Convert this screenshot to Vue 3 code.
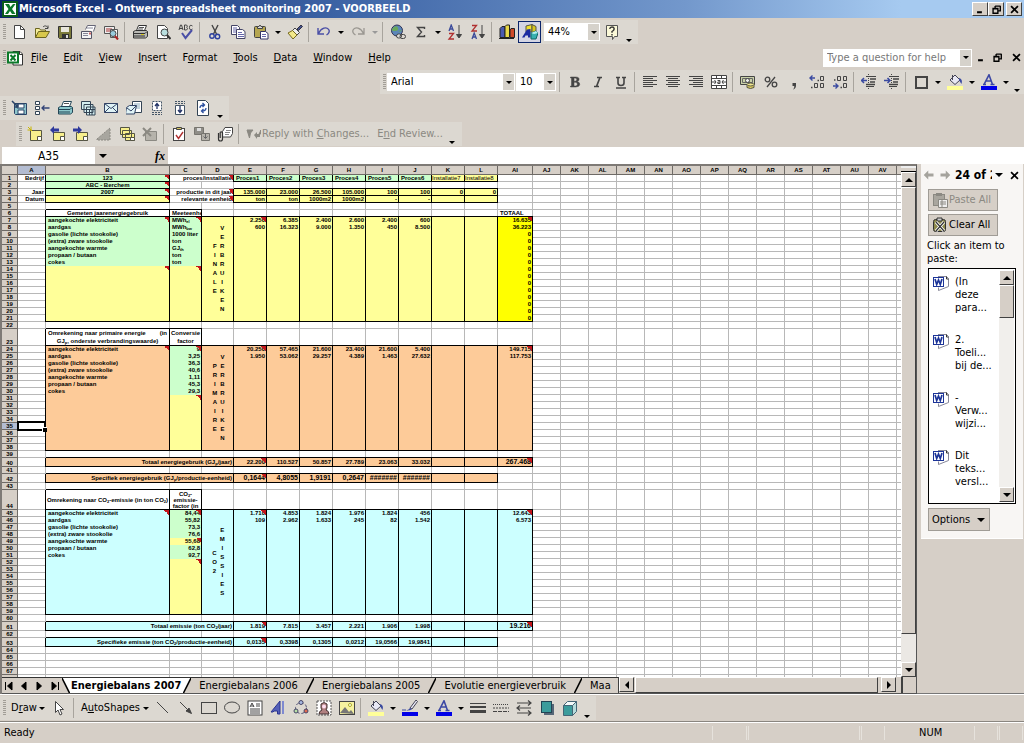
<script setup>
const icons = {
  excel: '<rect x="1" y="1" width="14" height="14" fill="#fff" stroke="#0a5a1a" stroke-width="2"/><path d="M3 3h4l1.500 3L11 3h2.500L10 8l3.500 5H10L8 10l-2 3H3l3.500-5z" fill="#0c7a2a"/>',
  book: '<path d="M6 1.500h7l2.500 2.500v11H6z" fill="#fff" stroke="#333"/><path d="M12.500 1.500v3h3" fill="none" stroke="#333"/><rect x="1" y="2.500" width="10" height="10" fill="#fff" stroke="#0c7a2a" stroke-width="2"/><path d="M3.500 5l5 5.500M8.500 5l-5 5.500" stroke="#0c7a2a" stroke-width="2"/>',
  new: '<path d="M3.500 1.500h6l4 4v9h-10z" fill="#fff" stroke="#444"/><path d="M9.500 1.500v4h4" fill="none" stroke="#444"/>',
  open: '<path d="M1.500 13.500v-9h4l1 1.500h5v2" fill="#f5ee9a" stroke="#6b6420"/><path d="M1.500 13.500l3-6h11l-3.500 6z" fill="#d8c84c" stroke="#6b6420"/><path d="M9 3c2-2 4-1 5 1M14 1.500V4.500h-3" fill="none" stroke="#444"/>',
  save: '<path d="M1.500 2.500h13v12h-12l-1-1z" fill="#7b7a3a" stroke="#333"/><path d="M4 3h8v5H4z" fill="#e8e6dc"/><path d="M5 10h7v4H5z" fill="#333"/><path d="M9 11h2v3H9z" fill="#ddd"/>',
  permission: '<path d="M5.500 5.500l2-4h8l-2 6" fill="#fff" stroke="#667"/><path d="M1.500 7.500h10v7h-10z" fill="#f4f4f4" stroke="#556"/><path d="M3 9.500h5M3 11.500h5M7 4h6" stroke="#889"/><rect x="9" y="8.500" width="2" height="2" fill="#c66"/>',
  search: '<path d="M1.500 2.500h10v7h-10z" fill="#eee" stroke="#555"/><path d="M3 5h6M3 7h5" stroke="#a33"/><path d="M7.500 5.500h7v8h-7z" fill="#fff" stroke="#555"/><circle cx="10" cy="9.500" r="3" fill="#9cd" stroke="#444"/><path d="M12 12l3 3.500" stroke="#a22" stroke-width="2"/>',
  print: '<path d="M4.500 6.500l2-5h8l-2 5" fill="#fff" stroke="#333"/><path d="M7 3.500h5M6 5h5" stroke="#555"/><path d="M1.500 7.500l2-1h11l1 1v5l-2 1.500h-12z" fill="#b9b9b4" stroke="#333"/><path d="M1.500 9.500h11.500l2-2M2 12h11" stroke="#333" fill="none"/><rect x="9" y="10" width="3" height="1" fill="#d8c820"/>',
  preview: '<path d="M2.500 1.500h7l3 3v10h-10z" fill="#fff" stroke="#444"/><circle cx="9.500" cy="8.500" r="3.500" fill="#b8dede" stroke="#444"/><path d="M12 11l3.500 4" stroke="#333" stroke-width="2"/>',
  spell: '<path d="M1 6l1.500-5h1L5 6M1.500 4.500h3M6.500 1v5h2q2-1.300.300-2.600 1.300-1.400-.3-2.400zM14.500 2q-3-2-3 1.500t3 1.500" fill="none" stroke="#444"/><path d="M4 9l3.500 5L14 6" fill="none" stroke="#4a4fa6" stroke-width="2"/>',
  cut: '<path d="M5 1l4.500 9M11 1L6.500 10" stroke="#444" stroke-width="1.400"/><circle cx="5" cy="12" r="2.200" fill="none" stroke="#2b3f9e" stroke-width="1.400"/><circle cx="10.500" cy="12.500" r="2.200" fill="none" stroke="#2b3f9e" stroke-width="1.400"/>',
  copy: '<path d="M1.500 1.500h6l2 2v7h-8z" fill="#fff" stroke="#446"/><path d="M3 4h4M3 6h5M3 8h5" stroke="#66a"/><path d="M6.500 5.500h6l2.500 2v7H6.500z" fill="#fff" stroke="#446"/><path d="M8 8.500h4M8 10.500h6M8 12.500h6" stroke="#66a"/>',
  paste: '<rect x="1.500" y="2.500" width="11" height="11" rx="1" fill="#b5a650" stroke="#444"/><path d="M4.500 4.500v-2h1.500l1-1.500 1 1.500h1.500v2z" fill="#ddd" stroke="#444"/><path d="M7.500 7.500h5l2.500 2v5.500H7.500z" fill="#fff" stroke="#336"/><path d="M9 10.500h4M9 12.500h4" stroke="#66a"/>',
  brush: '<path d="M10 5l4-4 1.500 1.500-4 4z" fill="#44508a" stroke="#334"/><path d="M8 4l4.500 4.500L10 11 5.500 6.500z" fill="#eee" stroke="#444"/><path d="M5.500 6.500L10 11l-4 4-5-6z" fill="#f3e98a" stroke="#776a20"/>',
  undo: '<path d="M2 4v6h6M2.500 9.500C5 4 11 2 13 6c1 2.500-1 4-2.500 5" fill="none" stroke="#4a4fa6" stroke-width="1.400"/>',
  redo: '<path d="M14 4v6H8M13.500 9.500C11 4 5 2 3 6c-1 2.500 1 4 2.500 5" fill="none" stroke="#9a9791" stroke-width="1.300"/>',
  link: '<circle cx="7" cy="6.500" r="5.500" fill="#5b86b8" stroke="#335"/><path d="M4 3q3-2 4 1t-3 3-3-2M8 8q3-3 4-1" fill="#69a85c"/><rect x="6.500" y="10" width="5" height="4" rx="2" fill="#ddd" stroke="#444"/><rect x="10" y="10.500" width="5.500" height="4" rx="2" fill="none" stroke="#444"/>',
  sum: '<path d="M11.500 5v-1.500h-7L8.500 8l-4 4.500h7V11" fill="none" stroke="#444" stroke-width="1.400"/>',
  sortAsc: '<path d="M2 7l2.200-6L6.500 7M3 5h3" fill="none" stroke="#3a4a9a" stroke-width="1.300"/><path d="M2 9.500h4.500L2 15h5" fill="none" stroke="#b03030" stroke-width="1.300"/><path d="M12 1v12M9.500 10.500l2.500 3.500 2.500-3.500z" stroke="#444" fill="#444"/>',
  sortDesc: '<path d="M2 1.500h4.500L2 7h5" fill="none" stroke="#b03030" stroke-width="1.300"/><path d="M2 15l2.200-6 2.300 6M3 13h3" fill="none" stroke="#3a4a9a" stroke-width="1.300"/><path d="M12 1v12M9.500 10.500l2.500 3.500 2.500-3.500z" stroke="#444" fill="#444"/>',
  chart: '<path d="M1 4.500l2-2h3v11H1z" fill="#4a5ab0" stroke="#222"/><path d="M6 2.500l1.500-1.500h3v12.500H6z" fill="#e8d848" stroke="#222"/><path d="M11 6l1-1.500h3.500v9H11z" fill="#d04a28" stroke="#222"/><path d="M0 14.500h15" stroke="#222"/>',
  drawing: '<path d="M4 2l6-1.500V8H4z" fill="#f1e02e" stroke="#554"/><path d="M10 .5l4 2V9h-4z" fill="#d8c620" stroke="#554"/><path d="M0 13.500L5 5.500l3.500-.5v8.500H6v-2H3.500l-1 2z" fill="#1a2aa0"/><path d="M9 9l5-2 2 2-2 6H9z" fill="#38b0b0" stroke="#166"/><path d="M9 9l5-2 2 2-4 1z" fill="#b8f0f0"/>',
  help: '<path d="M2.500 1.500h11v11h-3l-2 3v-3h-6z" fill="#fbf9d8" stroke="#555"/><path d="M5.700 5q.3-2 2.300-2t2.200 1.800Q10 6.300 8 7.500v1.300M8 10v1.500" fill="none" stroke="#333" stroke-width="1.400"/>',
  bold: '<path d="M3.500 3h5q4 0 3.500 2.800Q11.800 7.300 10 7.700q3 .4 2.700 2.900Q12.500 13 8.500 13h-5v-1H4.500V4H3.500zM7 4v3.200h1.200q1.600 0 1.600-1.600T8.200 4zm0 4.300V12h1.500q1.900 0 1.900-1.800T8.500 8.300z" fill="#444" stroke="#444" stroke-width=".5" fill-rule="evenodd"/>',
  italic: '<path d="M7 3.500h5M4 12.500h5M10 3.500l-3.500 9" stroke="#444" stroke-width="1.700" fill="none"/>',
  underline: '<path d="M3 3.500h4M9 3.500h4M5 3.500V9q0 2.500 3 2.500t3-2.500V3.500M3 14h10" fill="none" stroke="#444" stroke-width="1.600"/>',
  left: '<path d="M1 2.500h14M1 4.500h10M1 6.500h14M1 8.500h10M1 10.500h14M1 12.500h10" stroke="#444"/>',
  center: '<path d="M1 2.500h14M3 4.500h10M1 6.500h14M3 8.500h10M1 10.500h14M3 12.500h10" stroke="#444"/>',
  right: '<path d="M1 2.500h14M5 4.500h10M1 6.500h14M5 8.500h10M1 10.500h14M5 12.500h10" stroke="#444"/>',
  merge: '<path d="M.5 1.500h15v13H.5zM.5 4.500h15M.5 11.500h15M5.500 1.500v3M10.500 1.500v3M5.500 11.500v3M10.500 11.500v3" fill="#fff" stroke="#444"/><path d="M1 8h4M3.500 6L5 8l-1.500 2M15 8h-4M12.500 6L11 8l1.500 2M6.500 6.500h2.500v3H6.800V8H9" fill="none" stroke="#444"/>',
  currency: '<path d="M.5 2.500h14v8H.5z" fill="#c8d0a8" stroke="#444"/><path d="M2.500 4.500h10v4h-10z" fill="none" stroke="#666"/><circle cx="7.500" cy="6.500" r="2" fill="#eee" stroke="#444"/><path d="M7 10.500v3q3.500 2 7 0v-3" fill="#e2d060" stroke="#554"/><ellipse cx="10.500" cy="10.500" rx="3.500" ry="1.500" fill="#f0e690" stroke="#554"/>',
  percent: '<circle cx="4.500" cy="5.500" r="2.300" fill="none" stroke="#444" stroke-width="1.300"/><circle cx="11.500" cy="10.500" r="2.300" fill="none" stroke="#444" stroke-width="1.300"/><path d="M12 3L4 13" stroke="#444" stroke-width="1.300"/>',
  comma: '<path d="M6.500 9h3.500v2.500q0 3-3 4 1.500-1.500 1.300-3.500H6.500z" fill="#444"/>',
  incDec: '<path d="M1 4h5M3.500 1.500L1 4l2.500 2.500" fill="none" stroke="#3a4aa0" stroke-width="1.400"/><path d="M8.500 6.500h1.500M2 13.500h1.500" stroke="#444" stroke-width="1.500"/><path d="M11.500 2.500h3v4h-3zM5.500 9.500h3v4h-3zM11.500 9.500h3v4h-3z" fill="none" stroke="#444"/>',
  decDec: '<path d="M1 12h5M3.500 9.500L6 12l-2.500 2.500" fill="none" stroke="#3a4aa0" stroke-width="1.400"/><path d="M2 6h1.500M8.500 13.500h1.500" stroke="#444" stroke-width="1.500"/><path d="M5.500 2.500h3v4h-3zM11.500 2.500h3v4h-3zM11.500 9.500h3v4h-3z" fill="none" stroke="#444"/>',
  outdent: '<path d="M5 2.500h10M5 12.500h8" stroke="#444"/><path d="M9 5h6M9 8h5M5 10.500h9" stroke="#444" stroke-width="1.700"/><path d="M0 6.500h6M3 4L.5 6.500 3 9" fill="none" stroke="#3a4aa0" stroke-width="1.500"/><path d="M7.500 0v16" stroke="#444" stroke-dasharray="1 1"/>',
  indent: '<path d="M5 2.500h10M5 12.500h8" stroke="#444"/><path d="M9 5h6M9 8h5M5 10.500h9" stroke="#444" stroke-width="1.700"/><path d="M0 6.500h6M3.500 4L6 6.500 3.500 9" fill="none" stroke="#3a4aa0" stroke-width="1.500"/><path d="M7.500 0v16" stroke="#444" stroke-dasharray="1 1"/>',
  border: '<rect x="3" y="3" width="11" height="11" fill="none" stroke="#444" stroke-width="2"/>',
  fill: '<path d="M3 6l5-5 5 5-5 4.500z" fill="#e8e8f4" stroke="#445"/><path d="M5.500 1v5" stroke="#445"/><path d="M12 4q4 1 2.500 6Q13 8 12 6" fill="#3a4aa0"/><rect x="0" y="12" width="16" height="4" fill="#ffff99"/>',
  line: '<path d="M14 0l1.500 1.500L10 9 8 8z" fill="#e8e8f4" stroke="#445"/><path d="M8 8l2 1q-2 2-6 1.500Q7 9.500 8 8z" fill="#3a4aa0"/><path d="M0 10h4" stroke="#3a4aa0"/><rect x="0" y="12" width="16" height="4" fill="#0000e8"/>',
  font: '<path d="M3 10.500L8 .8l3.500 9.700M5 7h5.500M2 10.500h3M9.500 10.500h4" fill="none" stroke="#3c48a4" stroke-width="1.600"/><rect x="0" y="12" width="16" height="4" fill="#0000e8"/>',
  saveVer: '<path d="M3.500 3.500h12v11h-11l-1-1z" fill="#8ec6cc" stroke="#2b4468"/><path d="M6 4h7v4H6zM7 10h6v4H7z" fill="#fff" stroke="#2b4468"/><path d="M1 1l6 6M7 3v4H3" fill="none" stroke="#2b4468" stroke-width="1.500"/>',
  tree: '<path d="M1.500 1.500h4v3h-4zM1.500 6.500h4v3h-4zM1.500 11.500h4v3h-4z" fill="#fff" stroke="#345"/><path d="M15.500 8H8M10.500 5.500L8 8l2.500 2.500" fill="none" stroke="#347" stroke-width="1.300"/>',
  printTeal: '<path d="M4.500 6.500l2-5h8l-2 5" fill="#fff" stroke="#245"/><path d="M7 3.500h5" stroke="#555"/><path d="M1.500 7.500l2-1h11l1 1v5l-2 1.500h-12z" fill="#8cc8cc" stroke="#245"/><path d="M1.500 9.500h11.500l2-2M2 12h11" stroke="#245" fill="none"/>',
  sheets: '<path d="M1.500 1.500h9v8h-9zM4 4.500h9v8H4zM6.500 7h8.500v8H6.500z" fill="#d4eef0" stroke="#345"/><path d="M7 9.500h8M9.500 9.500V15M12 9.500V15" stroke="#345"/>',
  mail: '<path d="M1.500 3.500h13v9h-13z" fill="#dff3f6" stroke="#346"/><path d="M1.500 3.500l6.500 5 6.500-5M1.500 12.500l5-5M14.500 12.500l-5-5" fill="none" stroke="#346"/>',
  mailDoc: '<path d="M6.500 1.500h9v11h-9z" fill="#fff" stroke="#345"/><path d="M8 4h6M8 6h6M8 8h6" stroke="#8ab"/><path d="M.5 7.500l3-2h7l-2 8.500h-9z" fill="#dff3f6" stroke="#346"/><path d="M1 8l4 3 5-5" fill="none" stroke="#346"/>',
  moveUp: '<path d="M3.500 1.500h9v9h-9z" fill="#fff" stroke="#456" stroke-dasharray="2 1"/><path d="M8 9V4M6 6l2-2.500L10 6" fill="none" stroke="#236" stroke-width="1.300"/><path d="M3 12.500h10M3 14.500h10" stroke="#456" stroke-dasharray="2 1"/>',
  moveDown: '<path d="M3.500 5.500h9v9h-9z" fill="#fff" stroke="#456"/><path d="M8 6v6M6 10l2 2.500 2-2.500" fill="none" stroke="#236" stroke-width="1.300"/><path d="M3 1.500h10M3 3.500h10" stroke="#456" stroke-dasharray="2 1"/>',
  refresh: '<path d="M2.500.5h8l3 3v12h-11z" fill="#fff" stroke="#345"/><path d="M5 8q0-3 4-3M7.500 3l2 2-2 2M11 8q0 3-4 3M8.500 9l-2 2 2 2" fill="none" stroke="#2b50a0" stroke-width="1.300"/>',
  note: '<path d="M3.500 4.500h11v10h-11z" fill="#f7ef8c" stroke="#554"/><path d="M10.500 14.500v-4h4v4z" fill="#fff" stroke="#554"/><path d="M1 1l4 4M4 .5v4M.5 4h4" stroke="#c8b400"/>',
  prev: '<path d="M3.500 6.500h11v8h-11z" fill="#f7ef8c" stroke="#554"/><path d="M10.500 14.500v-4h4v4z" fill="#fff" stroke="#554"/><path d="M0 4l4-4v2.500h5v3H4V8z" fill="#2f3a9c"/>',
  next: '<path d="M3.500 6.500h11v8h-11z" fill="#f7ef8c" stroke="#554"/><path d="M10.500 14.500v-4h4v4z" fill="#fff" stroke="#554"/><path d="M9 4L5 0v2.500H0v3h5V8z" fill="#2f3a9c"/>',
  ink: '<path d="M1 13L14 2v12H1z" fill="#a8a69f" stroke="#8b8982" stroke-dasharray="2 1"/>',
  notes: '<path d="M1.500 1.500h9v7h-9zM3.500 4.500h9v7h-9zM6.500 7.500h9v7h-9z" fill="#f7ef8c" stroke="#554"/><path d="M11.500 14.500v-3h4v3z" fill="#fff" stroke="#554"/>',
  delNote: '<path d="M3.500 5.500h11v9h-11z" fill="#b6b3ab" stroke="#8b8982"/><path d="M1 2l8 8M9 2l-8 8" stroke="#8b8982" stroke-width="2"/>',
  task: '<rect x="2.500" y="2.500" width="11" height="12" fill="#fff" stroke="#444"/><path d="M5.500 3.500v-2h5v2z" fill="#d8c860" stroke="#444"/><path d="M5 9l2.500 3.500L12 6" fill="none" stroke="#b03030" stroke-width="1.400"/>',
  track: '<path d="M.5 1.500h9v7h-9z" fill="#8f8d87" stroke="#77756f"/><path d="M3 2h4v3H3z" fill="#ddd"/><path d="M7.500 7.500h8v7h-8z" fill="#b6b3ab" stroke="#77756f"/><path d="M11.500 8v4M9.500 10.500l2 2 2-2" fill="none" stroke="#666"/>',
  attach: '<path d="M5.500 5.500l2.500-4h7.500v6l-2 3.500h-8z" fill="#fff" stroke="#444"/><path d="M9 4.500h5M8 6.500h5M8 8.500h4" stroke="#888"/><path d="M1.500 7v6q0 2 2 2t2-2V7q0-1.200-1.200-1.200T3.200 7v5" fill="none" stroke="#333" stroke-width="1.200"/>',
  flags: '<path d="M1 4h6L4.500 7l-1 5zM14.500 4v4L11 11" fill="#8b8982" stroke="#8b8982"/><path d="M8 9l3-3v2h3v3h-3v2z" fill="#8b8982"/>',
  pointer: '<path d="M4.500 1.500v11l2.500-2.500 2 5 2-1-2-4.500h3.500z" fill="#fff" stroke="#444"/>',
  lineTool: '<path d="M2 2l11 11" stroke="#444"/>',
  arrowTool: '<path d="M2 2l8 8M13.500 13.500L8 11l3-3z" stroke="#444" fill="#444"/>',
  rect: '<rect x=".5" y="2.500" width="15" height="11" fill="none" stroke="#444"/>',
  oval: '<ellipse cx="8" cy="7.500" rx="7.500" ry="5.500" fill="none" stroke="#444"/>',
  textbox: '<rect x="1" y="1" width="14" height="14" fill="#fff" stroke="#444"/><path d="M3 7l2-4 2 4M4 6h3M9 4h4M9 6h4M3 9h10M3 11h10M3 13h10" fill="none" stroke="#444"/>',
  wordart: '<path d="M1 12L10 1v13H7.500v-3H4l-1 1z" fill="#5560b8" stroke="#2b3590"/><path d="M12 1h2v13h-2z" fill="#7f8ad0"/>',
  diagram: '<circle cx="8" cy="8" r="5.500" fill="none" stroke="#557" stroke-dasharray="3 2"/><circle cx="8" cy="2.500" r="2" fill="#a6b8e0" stroke="#446"/><circle cx="3" cy="11" r="2" fill="#b8e0a6" stroke="#446"/><circle cx="13" cy="11" r="2" fill="#e06a50" stroke="#446"/>',
  clipart: '<rect x="1" y="1" width="14" height="14" fill="#fff" stroke="#555" stroke-dasharray="2 1"/><path d="M5 4q3-3 6 0v4l-1 2q3 1 3 4H3q0-3 3-4L5 8z" fill="#b08080" stroke="#433"/><circle cx="8" cy="6.500" r="2" fill="#fde"/>',
  picture: '<rect x=".5" y="1.500" width="15" height="13" fill="#f6f2a0" stroke="#444"/><path d="M1 13l5-6 4 5 2-2 3 4z" fill="#777"/><circle cx="11" cy="5" r="1.500" fill="#fff" stroke="#aa2"/>',
  lineStyle: '<path d="M0 3.500h16" stroke="#444"/><path d="M0 7h16" stroke="#444" stroke-width="2"/><path d="M0 11.500h16" stroke="#444" stroke-width="3"/>',
  dashStyle: '<path d="M0 4.500h16" stroke="#444" stroke-dasharray="1 1"/><path d="M0 8h16" stroke="#444" stroke-dasharray="2 1"/><path d="M0 11.500h16" stroke="#444" stroke-dasharray="4 1"/>',
  arrowStyle: '<path d="M1 3h14M12 .5L15 3l-3 2.500M1 8h14M4 5.500L1 8l3 2.500M1 13h14M12 10.500l3 2.500-3 2.500" fill="none" stroke="#444" stroke-width="1.200"/>',
  shadow: '<rect x="5" y="4" width="10" height="11" fill="#567"/><rect x="2.500" y="1.500" width="10" height="11" fill="#3b9c9c" stroke="#245"/>',
  cube: '<path d="M1.500 5.500h9v10h-9z" fill="#3b9c9c" stroke="#467"/><path d="M1.500 5.500l4-4h9l-4 4z" fill="#f4fbfb" stroke="#467"/><path d="M10.500 5.500l4-4v10l-4 4z" fill="#b6dcdc" stroke="#467"/>',
  pasteAll: '<rect x="1.500" y="2.500" width="11" height="11" fill="#a9a69e" stroke="#8b8982"/><path d="M4 1h6v3H4z" fill="#8b8982"/><path d="M6.500 7.500h9v8h-9z" fill="#eee" stroke="#8b8982"/><path d="M8 10h6M8 12h6M10 8v7" stroke="#8b8982"/>',
  clearAll: '<rect x="1.500" y="2.500" width="12" height="12" rx="2" fill="#8e8a4c" stroke="#333"/><path d="M5 1h5v3H5z" fill="#ccc" stroke="#333"/><path d="M4 5l8 9M12 5l-8 9" stroke="#fff" stroke-width="3"/><path d="M4 5l8 9M12 5l-8 9" stroke="#333" stroke-width="1.200"/>',
  word: '<path d="M5 1.500h8.500l2 2v8l-10 4v-3" fill="#fff" stroke="#889"/><path d="M13.500 1.500v2.500h2" fill="none" stroke="#333"/><rect x=".5" y="2.500" width="10" height="9" fill="#fff" stroke="#1c3498"/><path d="M2 4l1.700 5.500L5.500 5l1.800 4.500L9 4" fill="none" stroke="#1c3498" stroke-width="1.700"/>',
  backNav: '<path d="M1 8l6-6v4h7v4H7v4z" fill="#a5a39d"/>',
  fwdNav: '<path d="M15 8L9 2v4H2v4h7v4z" fill="#a5a39d"/>',
  min: '<path d="M3 12h7" stroke="#000" stroke-width="3"/>',
  restore: '<path d="M6 3h8M6 3v3M13.500 3v7h-3M2.500 7h8M3 6.500v7h7V6.500z" fill="none" stroke="#000" stroke-width="2"/>',
  close: '<path d="M3 3l10 10M13 3L3 13" stroke="#000" stroke-width="2.500"/>',
}

const b = (icon, label) => ({ icon, label })
const sep = { sep: true }
const caret = { caret: true }
const standard = [b('new', 'New'), b('open', 'Open'), b('save', 'Save'), b('permission', 'Permission'), b('search', 'Search'), sep,
  b('print', 'Print'), b('preview', 'Print preview'), b('spell', 'Spelling'), sep,
  b('cut', 'Cut'), b('copy', 'Copy'), b('paste', 'Paste'), caret, b('brush', 'Format painter'), sep,
  b('undo', 'Undo'), caret, b('redo', 'Redo'), { caret: true, dim: true }, sep,
  b('link', 'Insert hyperlink'), b('sum', 'AutoSum'), caret, b('sortAsc', 'Sort ascending'), b('sortDesc', 'Sort descending'), sep,
  b('chart', 'Chart wizard'), { ...b('drawing', 'Drawing'), on: true }]
const formatting = [sep, b('bold', 'Bold'), b('italic', 'Italic'), b('underline', 'Underline'), sep,
  b('left', 'Align left'), b('center', 'Center'), b('right', 'Align right'), b('merge', 'Merge and center'), sep,
  b('currency', 'Currency'), b('percent', 'Percent'), b('comma', 'Comma style'), b('incDec', 'Increase decimal'), b('decDec', 'Decrease decimal'), sep,
  b('outdent', 'Decrease indent'), b('indent', 'Increase indent'), sep,
  b('border', 'Borders'), caret, b('fill', 'Fill color'), caret, b('font', 'Font color'), caret]
const custom = [b('saveVer', 'Save version'), b('tree', 'Outline'), b('printTeal', 'Print sheet'), b('sheets', 'Sheets'), b('mail', 'Mail'), b('mailDoc', 'Mail document'), b('moveUp', 'Move up'), b('moveDown', 'Move down'), b('refresh', 'Refresh')]
const reviewing = [b('note', 'New comment'), b('prev', 'Previous comment'), b('next', 'Next comment'), b('ink', 'Show ink'), b('notes', 'Show all comments'), b('delNote', 'Delete comment'), sep,
  b('task', 'Create task'), b('track', 'Update file'), b('attach', 'Send for review'), sep]
const shapes = [b('lineTool', 'Line'), b('arrowTool', 'Arrow'), b('rect', 'Rectangle'), b('oval', 'Oval'), b('textbox', 'Text box'), b('wordart', 'WordArt'), b('diagram', 'Diagram'), b('clipart', 'Clip art'), b('picture', 'Picture'), sep,
  b('fill', 'Fill color'), caret, b('line', 'Line color'), caret, b('font', 'Font color'), caret,
  b('lineStyle', 'Line style'), b('dashStyle', 'Dash style'), b('arrowStyle', 'Arrow style'), b('shadow', 'Shadow'), b('cube', '3-D')]
const menus = [['', 'F', 'ile'], ['', 'E', 'dit'], ['', 'V', 'iew'], ['', 'I', 'nsert'], ['F', 'o', 'rmat'], ['', 'T', 'ools'], ['', 'D', 'ata'], ['', 'W', 'indow'], ['', 'H', 'elp']]

const columns = ['A', 'B', 'C', 'D', 'E', 'F', 'G', 'H', 'I', 'J', 'K', 'L', 'AI', 'AJ', 'AK', 'AL', 'AM', 'AN', 'AO', 'AP', 'AQ', 'AR', 'AS', 'AT', 'AU', 'AV', '']
const colClass = (i) => (i === 0 ? 'w-a' : i === 1 ? 'w-b' : i < 4 ? 'w-c' : i < 12 ? 'w-e' : i === 12 ? 'w-ai' : 'w-a')

const cells = {}
const at = (r, c) => (cells[r + ':' + c] ??= { cls: [] })
const put = (r, c, text, ...cls) => { const x = at(r, c); x.text = text; x.cls.push(...cls) }
const fill = (r1, r2, c1, c2, cls) => { for (let r = r1; r <= r2; r++) for (let c = c1; c <= c2; c++) { const x = at(r, c); x.cls = x.cls.filter((k) => !k.startsWith('f-') && k !== 'filled'); x.cls.push('filled', cls) } }
const frame = (r1, r2, c1, c2) => {
  for (let r = r1; r <= r2; r++) { at(r, c1 - 1).cls.push('br'); at(r, c2).cls.push('br') }
  for (let c = c1; c <= c2; c++) { at(r1 - 1, c).cls.push('bb'); at(r2, c).cls.push('bb') }
}
const merge = (r, c, rows, cols) => {
  const main = at(r, c)
  for (let i = r; i < r + rows; i++) for (let j = c; j < c + cols; j++) if (i !== r || j !== c) { main.cls.push(...at(i, j).cls.filter((k) => k[0] === 'b')); at(i, j).skip = true }
  main.rows = rows
  main.cols = cols
}
const rowOf = (r, values, ...cls) => values.forEach((v, i) => put(r, 4 + i, v, 'num', ...cls))
const each = (r1, r2) => { for (let c = 4; c < 12; c++) frame(r1, r2, c, c) }

fill(1, 3, 1, 1, 'f-green'); fill(4, 4, 1, 1, 'f-yellow')
fill(1, 1, 4, 9, 'f-green'); fill(1, 1, 10, 11, 'f-yellow'); fill(3, 4, 4, 11, 'f-yellow')
for (let r = 1; r <= 4; r++) frame(r, r, 1, 1)
each(1, 1); each(3, 3); each(4, 4)
;['Bedrijf', '', 'Jaar', 'Datum'].forEach((t, i) => put(i + 1, 0, t, 'num'))
;['123', 'ABC - Berchem', '2007', ''].forEach((t, i) => put(i + 1, 1, t, 'mid', 'mark'))
put(1, 2, 'proces/installatie', 'num', 'mark'); put(3, 2, 'productie in dit jaar', 'num', 'mark'); put(4, 2, 'relevante eenheid', 'num', 'mark')
;[1, 3, 4].forEach((r) => merge(r, 2, 1, 2))
;['Proces1', 'Proces2', 'Proces3', 'Proces4', 'Proces5', 'Proces6', 'Installatie7', 'Installatie8'].forEach((t, i) => put(1, 4 + i, t, 'txt', i > 5 ? 'thin' : 'wide-text'))
rowOf(3, ['135.000', '23.000', '26.500', '105.000', '100', '100', '0', '0'])
rowOf(4, ['ton', 'ton', '1000m2', '1000m2', '-', '-'])

const fuels = ['aangekochte elektriciteit', 'aardgas', 'gasolie (lichte stookolie)', '(extra) zware stookolie', 'aangekochte warmte', 'propaan / butaan', 'cokes']
const block = (top, color, factors, words, rows, totals) => {
  const end = top + 14
  fill(top, end, 1, 12, color)
  frame(top - 1, top - 1, 1, 1); frame(top - 1, top - 1, 2, 2)
  frame(top, end, 1, 1); frame(top, end, 2, 2); frame(top, end, 3, 3)
  each(top, end); frame(top, end, 12, 12)
  fuels.forEach((t, i) => put(top + i, 1, t, 'txt'))
  factors.forEach((t, i) => put(top + i, 2, t, top === 7 ? 'txt' : 'num'))
  fill(top, top + 6, 2, 2, 'f-green'); fill(top + 7, end, 2, 2, 'f-yellow')
  at(top, 3).words = words
  merge(top, 3, 15, 1)
  rows.forEach((v, i) => rowOf(top + i, v))
  totals.forEach((t, i) => put(top + i, 12, t, 'num'))
  ;[1, 2, 4, 12].forEach((c) => at(top, c).cls.push('mark'))
  at(top + 7, 2).cls.push('mark')
}
block(7, 'f-yellow', ['MWh|el', 'MWh|bw', '1000 liter', 'ton', 'GJ|th', 'ton', 'ton'], ['FINALE', 'VERBRUIKEN'],
  [['2.250', '6.385', '2.400', '2.600', '2.400', '600'], ['600', '16.323', '9.000', '1.350', '450', '8.500']],
  ['16.635', '36.223', ...Array(13).fill('0')])
fill(7, 13, 1, 1, 'f-green'); fill(7, 21, 12, 12, 'f-bright')
at(14, 1).cls.push('mark')
put(6, 1, 'Gemeten jaarenergiegebruik', 'mid'); put(6, 2, 'Meeteenhe', 'txt'); put(6, 12, 'TOTAAL', 'txt')

block(24, 'f-orange', ['9', '3,25', '36,3', '40,6', '1,11', '45,3', '29,3'], ['PRIMAIRE', 'VERBRUIKEN'],
  [['20.250', '57.465', '21.600', '23.400', '21.600', '5.400'], ['1.950', '53.062', '29.257', '4.389', '1.463', '27.632']], ['149.715', '117.753'])
block(45, 'f-cyan', ['84,44', '55,82', '73,3', '76,6', '55,68', '62,8', '92,7'], ['CO2', 'EMISSIES'],
  [['1.710', '4.853', '1.824', '1.976', '1.824', '456'], ['109', '2.962', '1.633', '245', '82', '1.542']], ['12.643', '6.573'])
fill(49, 49, 2, 2, 'f-yellow'); at(49, 2).cls.push('mark')
at(23, 1).lines = [['Omrekening naar primaire energie', '(in'], ['GJ|p|, onderste verbrandingswaarde)']]
at(23, 2).lines = [['Conversie'], ['factor']]
put(44, 1, 'Omrekening naar CO|2|-emissie (in ton CO|2|)', 'mid')
at(44, 2).lines = [['CO|2|-'], ['emissie-'], ['factor (in']]

const summary = (r, color, label, values, total, ...cls) => {
  fill(r, r, 1, total ? 12 : 11, color)
  frame(r, r, 1, 3); each(r, r)
  put(r, 1, label, 'num')
  at(r, 1).cls = at(r, 1).cls.filter((k) => k !== 'br')
  merge(r, 1, 1, 3)
  rowOf(r, values, ...cls)
  at(r, 4).cls.push('mark')
  if (total) { frame(r, r, 12, 12); put(r, 12, total, 'num', 'mark', 'big') }
}
summary(40, 'f-orange', 'Totaal energiegebruik (GJ|p|/jaar)', ['22.200', '110.527', '50.857', '27.789', '23.063', '33.032'], '267.468')
summary(42, 'f-orange', 'Specifiek energiegebruik (GJ|p|/productie-eenheid)', ['0,1644', '4,8055', '1,9191', '0,2647', '#######', '#######'], '', 'big')
summary(61, 'f-cyan', 'Totaal emissie (ton CO|2|/jaar)', ['1.819', '7.815', '3.457', '2.221', '1.906', '1.998'], '19.216')
summary(63, 'f-cyan', 'Specifieke emissie (ton CO|2|/productie-eenheid)', ['0,0135', '0,3398', '0,1305', '0,0212', '19,0566', '19,9841'], '')
at(35, 0).cls.push('selected')

const rows = Array.from({ length: 68 }, (_, i) => i + 1).map((r) => ({
  r,
  label: r < 68 ? r : '',
  cls: r === 23 ? 'h-17' : r === 44 ? 'h-20' : [40, 42, 61, 63].includes(r) ? 'h-9' : 'h-7',
  cells: columns.map((_, c) => ({ c, ...(cells[r + ':' + c] || { cls: [] }) })).filter((x) => !x.skip),
}))
const parts = (t) => String(t ?? '').split('|')

const tabs = ['Energiebalans 2007', 'Energiebalans 2006', 'Energiebalans 2005', 'Evolutie energieverbruik', 'Maa']
const clips = [['(In', 'deze', 'para...'], ['2.', 'Toeli...', 'bij de...'], ['-', 'Verw...', 'wijzi...'], ['Dit', 'teks...', 'versl...']]
const navs = [['First sheet', 'M3.500 3v8M10 3L5.500 7l4.500 4z'], ['Previous sheet', 'M9 3L4.500 7 9 11z'], ['Next sheet', 'M5 3l4.500 4L5 11z'], ['Last sheet', 'M11.500 3v8M5 3l4.500 4L5 11z']]
</script>

<template>
  <div class="app">
    <header class="title">
      <svg class="ico" viewBox="0 0 16 16" v-html="icons.excel" />
      <h1>Microsoft Excel - Ontwerp spreadsheet monitoring 2007 - VOORBEELD</h1>
      <button v-for="n in ['min', 'restore', 'close']" :key="n" class="wbtn" :class="n" :aria-label="n"><svg viewBox="0 0 16 16" v-html="icons[n]" /></button>
    </header>

    <div class="row first">
      <div class="bar">
        <i class="grip" />
        <template v-for="(t, i) in standard" :key="i">
          <i v-if="t.sep" class="sep" />
          <i v-else-if="t.caret" class="caret" :class="{ dim: t.dim }" />
          <button v-else class="tool" :class="{ on: t.on }" :aria-label="t.label"><svg class="ico" viewBox="0 0 16 16" v-html="icons[t.icon]" /></button>
        </template>
        <span class="combo zoom"><select aria-label="Zoom"><option>44%</option></select><i class="caret" /></span>
        <button class="tool" aria-label="Help"><svg class="ico" viewBox="0 0 16 16" v-html="icons.help" /></button>
        <i class="caret low" />
      </div>
    </div>

    <nav class="row menu">
      <i class="grip" />
      <svg class="ico" viewBox="0 0 16 16" v-html="icons.book" />
      <button v-for="m in menus" :key="m.join('')" class="mi">{{ m[0] }}<u>{{ m[1] }}</u>{{ m[2] }}</button>
      <span class="combo ask"><input aria-label="Type a question for help" placeholder="Type a question for help"><i class="caret" /></span>
      <button v-for="n in ['min', 'restore', 'close']" :key="n" class="flat" :class="n" :aria-label="'Workbook ' + n"><svg viewBox="0 0 16 16" v-html="icons[n]" /></button>
    </nav>

    <div class="row end">
      <div class="bar">
        <i class="grip" />
        <span class="combo face"><select aria-label="Font"><option>Arial</option></select><i class="caret" /></span>
        <span class="combo size"><select aria-label="Font size"><option>10</option></select><i class="caret" /></span>
        <template v-for="(t, i) in formatting" :key="i">
          <i v-if="t.sep" class="sep" />
          <i v-else-if="t.caret" class="caret" />
          <button v-else class="tool" :aria-label="t.label"><svg class="ico" viewBox="0 0 16 16" v-html="icons[t.icon]" /></button>
        </template>
        <i class="caret low" />
      </div>
    </div>

    <div class="row">
      <div class="bar">
        <i class="grip" />
        <button v-for="t in custom" :key="t.icon" class="tool" :aria-label="t.label"><svg class="ico" viewBox="0 0 16 16" v-html="icons[t.icon]" /></button>
        <i class="caret low" />
      </div>
    </div>

    <div class="row inset">
      <div class="bar">
        <i class="grip" />
        <template v-for="(t, i) in reviewing" :key="i">
          <i v-if="t.sep" class="sep" />
          <button v-else class="tool" :aria-label="t.label"><svg class="ico" viewBox="0 0 16 16" v-html="icons[t.icon]" /></button>
        </template>
        <button class="wide" disabled><svg class="ico" viewBox="0 0 16 16" v-html="icons.flags" />Reply with <u>C</u>hanges...</button>
        <button class="wide" disabled>E<u>n</u>d Review...</button>
        <i class="caret low" />
      </div>
    </div>

    <div class="formula">
      <input class="name" aria-label="Name box" value="A35">
      <i class="caret" />
      <span class="fx">fx</span>
      <input class="expr" aria-label="Formula">
    </div>

    <main class="main">
      <section class="book">
        <div class="sheet">
          <div class="grid">
            <table>
              <colgroup><col class="w-h"><col v-for="(c, i) in columns" :key="c" :class="colClass(i)"></colgroup>
              <thead>
                <tr><th /><th v-for="(c, i) in columns" :key="c" :class="{ hot: i === 0 }">{{ c }}</th></tr>
              </thead>
              <tbody>
                <tr v-for="row in rows" :key="row.r" :class="row.cls">
                  <th :class="{ hot: row.r === 35 }">{{ row.label }}</th>
                  <td v-for="x in row.cells" :key="x.c" :class="x.cls" :rowspan="x.rows" :colspan="x.cols">
                    <div v-if="x.words" class="words">
                      <div v-for="w in x.words" :key="w"><span v-for="(l, k) in w" :key="k">{{ l }}</span></div>
                    </div>
                    <template v-else-if="x.lines">
                      <div v-for="(line, k) in x.lines" :key="k" class="line"><span v-for="(s, j) in line" :key="j"><template v-for="(p, q) in parts(s)" :key="q"><sub v-if="q % 2">{{ p }}</sub><template v-else>{{ p }}</template></template></span></div>
                    </template>
                    <template v-else><template v-for="(p, q) in parts(x.text)" :key="q"><sub v-if="q % 2">{{ p }}</sub><template v-else>{{ p }}</template></template></template>
                  </td>
                </tr>
              </tbody>
            </table>
          </div>
          <div class="vscroll">
            <i class="split" />
            <button class="sb up" aria-label="Scroll up" />
            <i class="thumb" />
            <i class="track" />
            <button class="sb down" aria-label="Scroll down" />
          </div>
        </div>
        <div class="tabs">
          <div class="names">
            <button v-for="n in navs" :key="n[0]" class="nav" :aria-label="n[0]"><svg viewBox="0 0 14 14"><path :d="n[1]" fill="#000" stroke="#000" /></svg></button>
            <svg class="slant" viewBox="0 0 8 16"><path d="M0 0h8v16z" fill="#fff" /><path d="M0 0l8 16" stroke="#000" stroke-width="1.500" /></svg>
            <template v-for="(t, i) in tabs" :key="t">
              <button class="tab" :class="{ active: i === 0 }">{{ t }}</button>
              <svg v-if="i < 4" class="slant" viewBox="0 0 8 16"><path v-if="i === 0" d="M0 0h8L0 16z" fill="#fff" /><path d="M8 0L0 16" stroke="#000" stroke-width="1.500" /></svg>
            </template>
          </div>
          <div class="hscroll">
            <button class="sb lt" aria-label="Scroll left" />
            <i class="thumb" />
            <button class="sb rt" aria-label="Scroll right" />
          </div>
          <i class="corner" />
        </div>
      </section>

      <aside class="pane">
        <div class="card">
          <div class="ptitle">
            <svg class="nico" viewBox="0 0 16 16" v-html="icons.backNav" />
            <svg class="nico" viewBox="0 0 16 16" v-html="icons.fwdNav" />
            <h2>24 of 24</h2>
            <i class="caret" />
            <button class="flat" aria-label="Close pane"><svg viewBox="0 0 16 16" v-html="icons.close" /></button>
          </div>
          <button class="pbtn" disabled><svg class="ico" viewBox="0 0 16 16" v-html="icons.pasteAll" />Paste All</button>
          <button class="pbtn"><svg class="ico" viewBox="0 0 16 16" v-html="icons.clearAll" />Clear All</button>
          <p>Click an item to paste:</p>
          <div class="list">
            <ul>
              <li v-for="c in clips" :key="c[0]"><svg class="ico" viewBox="0 0 16 16" v-html="icons.word" /><span><template v-for="l in c" :key="l">{{ l }}<br></template></span></li>
            </ul>
            <div class="pscroll"><button class="sb up" aria-label="Up" /><i class="thumb" /><i class="track" /><button class="sb down" aria-label="Down" /></div>
          </div>
          <button class="pbtn opt">Options<i class="caret" /></button>
        </div>
      </aside>
    </main>

    <div class="row draw">
      <div class="bar">
        <i class="grip" />
        <button class="wide">D<u>r</u>aw<i class="caret" /></button>
        <button class="tool" aria-label="Select objects"><svg class="ico" viewBox="0 0 16 16" v-html="icons.pointer" /></button>
        <i class="sep" />
        <button class="wide">A<u>u</u>toShapes<i class="caret" /></button>
        <template v-for="(t, i) in shapes" :key="i">
          <i v-if="t.sep" class="sep" />
          <i v-else-if="t.caret" class="caret" />
          <button v-else class="tool" :aria-label="t.label"><svg class="ico" viewBox="0 0 16 16" v-html="icons[t.icon]" /></button>
        </template>
        <i class="caret low" />
      </div>
    </div>

    <footer class="status"><span class="ready">Ready</span><i class="s1" /><i class="s2" /><i class="s3" /><span class="num-lock">NUM</span><i class="s3" /><i class="s3" /></footer>
  </div>
</template>

<style>
html, body { height: 100%; }
#app { height: 100%; }
</style>

<style scoped>
.app { display: flex; flex-direction: column; height: 100%; overflow: hidden; background: #d6cfc7; color: #000; font: 11px/14px "DejaVu Sans Condensed", "DejaVu Sans", sans-serif; }
* { box-sizing: border-box; }
button, input, select { font: inherit; color: inherit; margin: 0; padding: 0; border: 0; border-radius: 0; background: none; outline: 0; }
svg { display: block; }
.ico { width: 16px; height: 16px; flex: none; }

.title { display: flex; align-items: center; height: 18px; flex: none; padding: 0 2px; background: linear-gradient(90deg, #0a246a, #4067a8 35%, #7398cc 67%, #a6caf0 88%); color: #fff; }
.title h1 { flex: 1; margin: 0 0 0 1px; font-size: 11px; font-weight: bold; white-space: nowrap; }
.wbtn { width: 16px; height: 14px; background: #d6cfc7; border: 1px solid; border-color: #fff #404040 #404040 #fff; }
.wbtn svg, .flat svg { width: 11px; height: 11px; margin: auto; }
.wbtn.close { margin-left: 2px; }
.flat { width: 16px; height: 16px; }
.flat.min { margin-left: 1px; }
.flat.close { margin-left: 3px; }

.row { display: flex; align-items: center; height: 26px; flex: none; }
.first { height: 28px; }
.bar { display: flex; align-items: center; height: 24px; background: #dcd8d1; padding-right: 4px; }
.end { justify-content: flex-end; }
.end .bar { padding-right: 2px; }
.inset { padding-left: 16px; }
.grip { width: 3px; height: 16px; margin: 0 1px 0 3px; background: repeating-linear-gradient(#a19d96 0 1px, #dcd8d1 1px 2px); }
.tool { display: flex; align-items: center; justify-content: center; width: 23px; height: 22px; flex: none; }
.tool.on { background: #d4d5e4; border: 1px solid #0a246a; }
.sep { width: 1px; height: 20px; margin: 0 3px 0 2px; background: #a8a49d; flex: none; }
.caret { display: flex; align-items: center; justify-content: center; width: 11px; height: 16px; flex: none; }
.caret::before { content: ""; border: 3px solid transparent; border-top-color: #000; border-bottom: 0; }
.caret.dim::before { border-top-color: #999; }
.caret.low { align-items: flex-end; height: 20px; }
.combo { position: relative; display: flex; height: 18px; background: #fff; border: 1px solid #fff; }
.combo select, .combo input { width: 100%; appearance: none; padding: 0 14px 0 3px; }
.combo .caret { position: absolute; right: 0; top: 0; background: #d6d2cb; pointer-events: none; }
.zoom { width: 56px; margin-left: 3px; }
.face { width: 128px; margin-right: 1px; }
.size { width: 40px; margin-right: 1px; }
.wide { display: flex; align-items: center; height: 22px; padding: 0 4px; white-space: pre; }
.wide:disabled { color: #8b8982; }

.menu { height: 23px; }
.mi { height: 20px; padding: 0 8px; white-space: nowrap; }
.ask { width: 149px; height: 18px; margin-left: auto; }
.ask input::placeholder { color: #777; opacity: 1; }

.formula { display: flex; align-items: center; height: 17px; flex: none; }
.name { width: 93px; height: 17px; margin-left: 2px; background: #fff; text-align: center; font-size: 12px; }
.formula .caret { width: 16px; }
.formula .caret::before { border-width: 4px 4px 0; }
.fx { flex: none; width: 57px; padding-right: 3px; text-align: right; font: italic bold 12px/16px "Liberation Serif", serif; }
.expr { flex: 1; min-width: 0; height: 17px; background: #fff; }

.main { display: flex; flex: 1; min-height: 0; }
.book { display: flex; flex-direction: column; flex: 1; min-width: 0; border-top: 2px solid #7e7a76; border-left: 2px solid #7e7a76; border-right: 1px solid #555; }
.sheet { display: flex; flex: 1; min-height: 0; }
.grid { flex: 1; min-width: 0; overflow: hidden; background: #fff; }
table { width: 0; table-layout: fixed; border-collapse: separate; border-spacing: 0; font: bold 6px/6px "Liberation Sans", Arial, sans-serif; }
.w-h { width: 16px; }
.w-a { width: 28px; }
.w-b { width: 124px; }
.w-c { width: 32px; }
.w-e { width: 33px; }
.w-ai { width: 35px; }
th, td { position: relative; padding: 0; overflow: hidden; white-space: nowrap; }
th { background: #d6cfc7; border: 0 solid #6e6a66; border-width: 0 1px 1px 0; text-align: center; vertical-align: bottom; }
thead th { height: 9px; line-height: 8px; }
th.hot { background: #b4bdd2; }
td { --gx: -1px; --gy: -1px; border: 0 solid #000; box-shadow: inset var(--gx) var(--gy) #b8b8b8; }
tr.h-7 { height: 7px; }
tr.h-9 { height: 9px; }
tr.h-17 { height: 17px; }
tr.h-20 { height: 20px; }
.h-7 td:not([rowspan="15"]) { vertical-align: top; }
.num { text-align: right; padding-right: 2px; }
.num.br { padding-right: 1px; }
.txt { padding-left: 2px; }
.mid { text-align: center; }
.big { font-size: 7px; }
.thin { padding-left: 0; font-weight: normal; }
.filled { --gx: 0; --gy: 0; }
.f-green { background: #ccffcc; }
.f-yellow { background: #ffff99; }
.f-orange { background: #fdcb99; }
.f-cyan { background: #ccffff; }
.f-bright { background: #ffff00; }
.br { --gx: 0; border-right-width: 1px; }
.bb { --gy: 0; border-bottom-width: 1px; }
.mark::after { content: ""; position: absolute; top: 0; right: 0; width: 5px; height: 5px; background: linear-gradient(to top right, transparent 50%, #c4161c 50%); }
.selected { overflow: visible; }
.selected::before { content: ""; position: absolute; z-index: 1; inset: -2px -1px -1px -1px; border: 2px solid #000; }
.selected::after { content: ""; position: absolute; z-index: 2; right: -2px; bottom: -2px; width: 4px; height: 4px; background: #000; border: solid #fff; border-width: 1px 0 0 1px; }
sub { font-size: 4px; line-height: 0; vertical-align: -1px; }
.line { display: flex; justify-content: center; }
.line:has(span + span) { justify-content: space-between; padding: 0 2px; }
.h-17 .line { line-height: 8px; }
.words { display: flex; justify-content: center; align-items: center; gap: 3px; padding-left: 2px; }
.words div { display: flex; flex-direction: column; }
.words span { line-height: 9px; text-align: center; }

.vscroll { display: flex; flex-direction: column; width: 15px; background: #ebe8e4; }
.split { height: 6px; background: #d6cfc7; border-top: 2px solid #eee; border-bottom: 1px solid #000; }
.sb { display: flex; align-items: center; justify-content: center; width: 15px; height: 15px; flex: none; background: #d6cfc7; border: 1px solid; border-color: #fff #404040 #404040 #fff; }
.sb::before { content: ""; border: 4px solid transparent; }
.up::before { border-top: 0; border-bottom-color: #000; }
.down::before { border-bottom: 0; border-top-color: #000; }
.lt::before { border-left: 0; border-right-color: #000; }
.rt::before { border-right: 0; border-left-color: #000; }
.thumb { background: #d6cfc7; border: 1px solid; border-color: #fff #404040 #404040 #fff; }
.vscroll .thumb { flex: 16; }
.vscroll .track { flex: 1; }
.tabs { display: flex; height: 17px; border-bottom: 1px solid #555; }
.names { display: flex; width: 616px; overflow: hidden; border-top: 1px solid #333; }
.nav { width: 15px; flex: none; padding-top: 1px; }
.nav svg { width: 14px; height: 14px; }
.slant { width: 8px; height: 16px; flex: none; }
.tab { flex: none; padding: 0 8px; white-space: nowrap; }
.tab.active { padding: 0 2px 0 1px; background: #fff; font-weight: bold; }
.hscroll { display: flex; flex: 1; border-left: 1px solid #404040; }
.hscroll .thumb { flex: 1; margin: 0 3px 0 1px; }
.corner { width: 15px; margin-left: 5px; border-left: 2px solid #404040; }

.pane { width: 107px; flex: none; padding: 0 1px 0 4px; border-bottom: 1px solid #777; }
.card { display: flex; flex-direction: column; align-items: flex-start; height: 375px; padding: 3px 7px 0; background: #f8f6f4; border-bottom: 1px solid #fff; }
.ptitle { display: flex; align-items: center; align-self: stretch; height: 16px; margin: 0 -6px 6px -5px; }
.nico { width: 12px; height: 12px; margin-right: 4px; }
.ptitle h2 { flex: 1; min-width: 0; margin: 0; overflow: hidden; font-size: 12px; white-space: nowrap; }
.ptitle .caret { width: 14px; }
.ptitle .caret::before { border-width: 4px 4px 0; }
.pbtn { display: flex; align-items: center; gap: 1px; width: 70px; height: 22px; margin-bottom: 3px; padding: 0 3px; background: #d6cfc7; border: 1px solid #a09c96; white-space: nowrap; }
.pbtn:disabled { color: #8b8982; }
.card p { margin: 0 -6px 3px -1px; line-height: 13px; }
.list { display: flex; align-self: stretch; height: 236px; margin-bottom: 4px; border: 1px solid #000; background: #fff; }
ul { flex: 1; min-width: 0; margin: 0; padding: 6px 0 0 4px; overflow: hidden; list-style: none; }
li { display: flex; gap: 6px; height: 58px; line-height: 13px; white-space: nowrap; }
.pscroll { display: flex; flex-direction: column; width: 15px; margin: 1px; background: #f1efec; }
.pscroll .thumb { height: 33px; }
.pscroll .track { flex: 1; }
.opt { width: 62px; height: 23px; gap: 5px; }
.opt .caret::before { border-width: 4px 4px 0; }

.draw { height: 27px; border-top: 1px solid #fff; }
.draw .wide { padding: 0 0 0 4px; }
.status { display: flex; align-items: center; height: 23px; flex: none; padding-left: 4px; border-top: 1px solid #8a8680; box-shadow: inset 0 1px #fff, inset 0 -1px #fff; }
.ready { flex: 1; }
.status i { height: 14px; border-left: 1px solid #e6e2dc; border-right: 1px solid #e6e2dc; margin-right: 1px; }
.s1 { width: 35px; }
.s2 { width: 112px; }
.s3 { width: 24px; }
.num-lock { width: 56px; padding-left: 33px; margin-right: 32px; }
</style>
